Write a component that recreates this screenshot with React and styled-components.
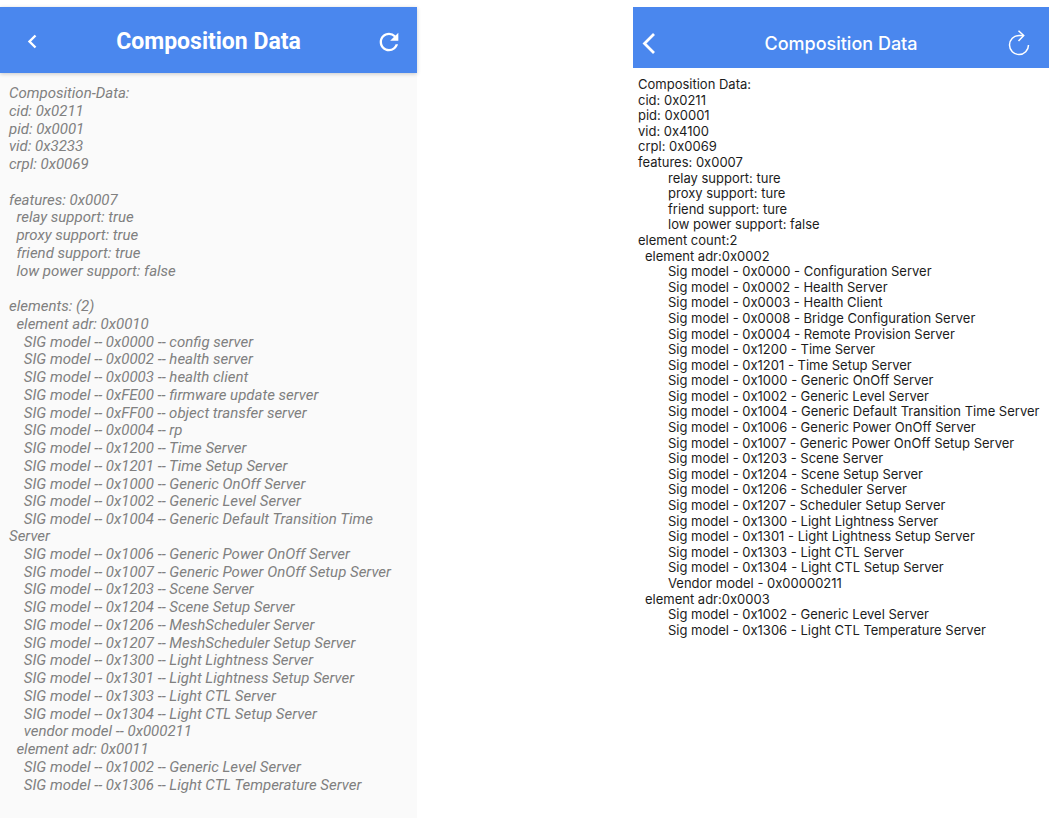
import React from "react";
import styled, { createGlobalStyle } from "styled-components";

const GlobalStyle = createGlobalStyle`
  *, *::before, *::after { box-sizing: border-box; }
  body { margin: 0; background: #ffffff; }
`;

const Page = styled.main`
  display: grid;
  grid-template-columns: 417fr 216fr 416fr;
  min-height: 100vh;
  padding: 7px 2px 2px 0;
`;

const Screen = styled.section`
  grid-column: ${(p) => p.$column};
  display: flex;
  flex-direction: column;
  min-width: 0;
  background: ${(p) => (p.$android ? "#fafafa" : "#ffffff")};
  font-family: ${(p) => (p.$android ? "Roboto" : "Inter")}, "Liberation Sans", sans-serif;
`;

const AppBar = styled.header`
  display: grid;
  grid-template-columns: 64px 1fr 64px;
  align-items: center;
  flex: none;
  height: ${(p) => (p.$android ? 66 : 61)}px;
  padding-top: ${(p) => (p.$android ? 3 : 13)}px;
  background: #4a87ee;
  color: #ffffff;
  box-shadow: ${(p) => (p.$android ? "0 1px 4px rgba(0, 0, 0, 0.2)" : "none")};
`;

const Title = styled.h1`
  margin: 0;
  text-align: center;
  white-space: nowrap;
  font-size: ${(p) => (p.$android ? 23 : 18)}px;
  line-height: 28px;
  font-weight: ${(p) => (p.$android ? 700 : 500)};
`;

const IconButton = styled.button`
  display: flex;
  align-items: center;
  justify-content: ${(p) => p.$align || "center"};
  height: 32px;
  padding: 0 ${(p) => p.$inset || 0}px;
  border: 0;
  background: none;
  color: inherit;
  cursor: pointer;

  svg { display: block; flex: none; }
`;

const Lines = styled.ul`
  flex: 1;
  display: flex;
  flex-direction: column;
  justify-content: space-between;
  margin: 0;
  padding: ${(p) => (p.$android ? "12px 9px 24px" : "9px 5px 180px")};
  list-style: none;
  color: ${(p) => (p.$android ? "#808080" : "#1c1c1c")};
  font-size: ${(p) => (p.$android ? 15 : 13)}px;
  line-height: ${(p) => (p.$android ? 17 : 15)}px;
  font-style: ${(p) => (p.$android ? "italic" : "normal")};
`;

const Line = styled.li`
  min-height: ${(p) => (p.$android ? 17 : 15)}px;
  white-space: pre-wrap;
  padding-left: ${(p) => p.$indent || 0}px;
`;

const androidLines = [
  "Composition-Data:",
  "cid: 0x0211",
  "pid: 0x0001",
  "vid: 0x3233",
  "crpl: 0x0069",
  "",
  "features: 0x0007",
  "  relay support: true",
  "  proxy support: true",
  "  friend support: true",
  "  low power support: false",
  "",
  "elements: (2)",
  "  element adr: 0x0010",
  "    SIG model -- 0x0000 -- config server",
  "    SIG model -- 0x0002 -- health server",
  "    SIG model -- 0x0003 -- health client",
  "    SIG model -- 0xFE00 -- firmware update server",
  "    SIG model -- 0xFF00 -- object transfer server",
  "    SIG model -- 0x0004 -- rp",
  "    SIG model -- 0x1200 -- Time Server",
  "    SIG model -- 0x1201 -- Time Setup Server",
  "    SIG model -- 0x1000 -- Generic OnOff Server",
  "    SIG model -- 0x1002 -- Generic Level Server",
  "    SIG model -- 0x1004 -- Generic Default Transition Time Server",
  "    SIG model -- 0x1006 -- Generic Power OnOff Server",
  "    SIG model -- 0x1007 -- Generic Power OnOff Setup Server",
  "    SIG model -- 0x1203 -- Scene Server",
  "    SIG model -- 0x1204 -- Scene Setup Server",
  "    SIG model -- 0x1206 -- MeshScheduler Server",
  "    SIG model -- 0x1207 -- MeshScheduler Setup Server",
  "    SIG model -- 0x1300 -- Light Lightness Server",
  "    SIG model -- 0x1301 -- Light Lightness Setup Server",
  "    SIG model -- 0x1303 -- Light CTL Server",
  "    SIG model -- 0x1304 -- Light CTL Setup Server",
  "    vendor model -- 0x000211",
  "  element adr: 0x0011",
  "    SIG model -- 0x1002 -- Generic Level Server",
  "    SIG model -- 0x1306 -- Light CTL Temperature Server",
];

const iosIndents = [0, 7, 30];

const iosLines = [
  [0, "Composition Data:"],
  [0, "cid: 0x0211"],
  [0, "pid: 0x0001"],
  [0, "vid: 0x4100"],
  [0, "crpl: 0x0069"],
  [0, "features: 0x0007"],
  [2, "relay support: ture"],
  [2, "proxy support: ture"],
  [2, "friend support: ture"],
  [2, "low power support: false"],
  [0, "element count:2"],
  [1, "element adr:0x0002"],
  [2, "Sig model - 0x0000 - Configuration Server"],
  [2, "Sig model - 0x0002 - Health Server"],
  [2, "Sig model - 0x0003 - Health Client"],
  [2, "Sig model - 0x0008 - Bridge Configuration Server"],
  [2, "Sig model - 0x0004 - Remote Provision Server"],
  [2, "Sig model - 0x1200 - Time Server"],
  [2, "Sig model - 0x1201 - Time Setup Server"],
  [2, "Sig model - 0x1000 - Generic OnOff Server"],
  [2, "Sig model - 0x1002 - Generic Level Server"],
  [2, "Sig model - 0x1004 - Generic Default Transition Time Server"],
  [2, "Sig model - 0x1006 - Generic Power OnOff Server"],
  [2, "Sig model - 0x1007 - Generic Power OnOff Setup Server"],
  [2, "Sig model - 0x1203 - Scene Server"],
  [2, "Sig model - 0x1204 - Scene Setup Server"],
  [2, "Sig model - 0x1206 - Scheduler Server"],
  [2, "Sig model - 0x1207 - Scheduler Setup Server"],
  [2, "Sig model - 0x1300 - Light Lightness Server"],
  [2, "Sig model - 0x1301 - Light Lightness Setup Server"],
  [2, "Sig model - 0x1303 - Light CTL Server"],
  [2, "Sig model - 0x1304 - Light CTL Setup Server"],
  [2, "Vendor model - 0x00000211"],
  [1, "element adr:0x0003"],
  [2, "Sig model - 0x1002 - Generic Level Server"],
  [2, "Sig model - 0x1306 - Light CTL Temperature Server"],
];

const AndroidBack = () => (
  <svg width="10" height="16" viewBox="0 0 10 16" fill="none" stroke="currentColor" strokeWidth="2.4" aria-hidden="true">
    <path d="M8.500 1.500 2.500 7.500l6 6" />
  </svg>
);

const AndroidRefresh = () => (
  <svg width="28" height="28" viewBox="0 0 24 24" fill="currentColor" aria-hidden="true">
    <path d="M17.65 6.35A7.958 7.958 0 0 0 12 4c-4.42 0-7.99 3.58-7.99 8s3.57 8 7.99 8c3.73 0 6.84-2.55 7.73-6h-2.08A5.99 5.99 0 0 1 12 18c-3.31 0-6-2.69-6-6s2.69-6 6-6c1.66 0 3.14.69 4.22 1.78L13 11h7V4l-2.35 2.35z" />
  </svg>
);

const IosBack = () => (
  <svg width="14" height="24" viewBox="0 0 14 24" fill="none" stroke="currentColor" strokeWidth="2.8" aria-hidden="true">
    <path d="M12 2 2.500 11.500l9.500 9.500" />
  </svg>
);

const IosRefresh = () => (
  <svg width="22" height="28" viewBox="0 0 22 28" fill="none" stroke="currentColor" strokeWidth="1.5" aria-hidden="true">
    <path d="M20.500 15A9.500 9.500 0 1 1 11 5.500h4.500" />
    <path d="M10.500.8l5.200 4.700-5.200 5.400" />
  </svg>
);

export default function App() {
  return (
    <>
      <GlobalStyle />
      <Page>
        <Screen $android $column={1} aria-label="Android">
          <AppBar $android>
            <IconButton type="button" aria-label="Back"><AndroidBack /></IconButton>
            <Title $android>Composition Data</Title>
            <IconButton type="button" $align="flex-end" $inset={14} aria-label="Refresh"><AndroidRefresh /></IconButton>
          </AppBar>
          <Lines $android>
            {androidLines.map((text, i) => (
              <Line $android key={i}>{text}</Line>
            ))}
          </Lines>
        </Screen>
        <Screen $column={3} aria-label="iOS">
          <AppBar>
            <IconButton type="button" $align="flex-start" $inset={9} aria-label="Back"><IosBack /></IconButton>
            <Title>Composition Data</Title>
            <IconButton type="button" $align="flex-end" $inset={19} aria-label="Refresh"><IosRefresh /></IconButton>
          </AppBar>
          <Lines>
            {iosLines.map(([level, text], i) => (
              <Line key={i} $indent={iosIndents[level]}>{text}</Line>
            ))}
          </Lines>
        </Screen>
      </Page>
    </>
  );
}
